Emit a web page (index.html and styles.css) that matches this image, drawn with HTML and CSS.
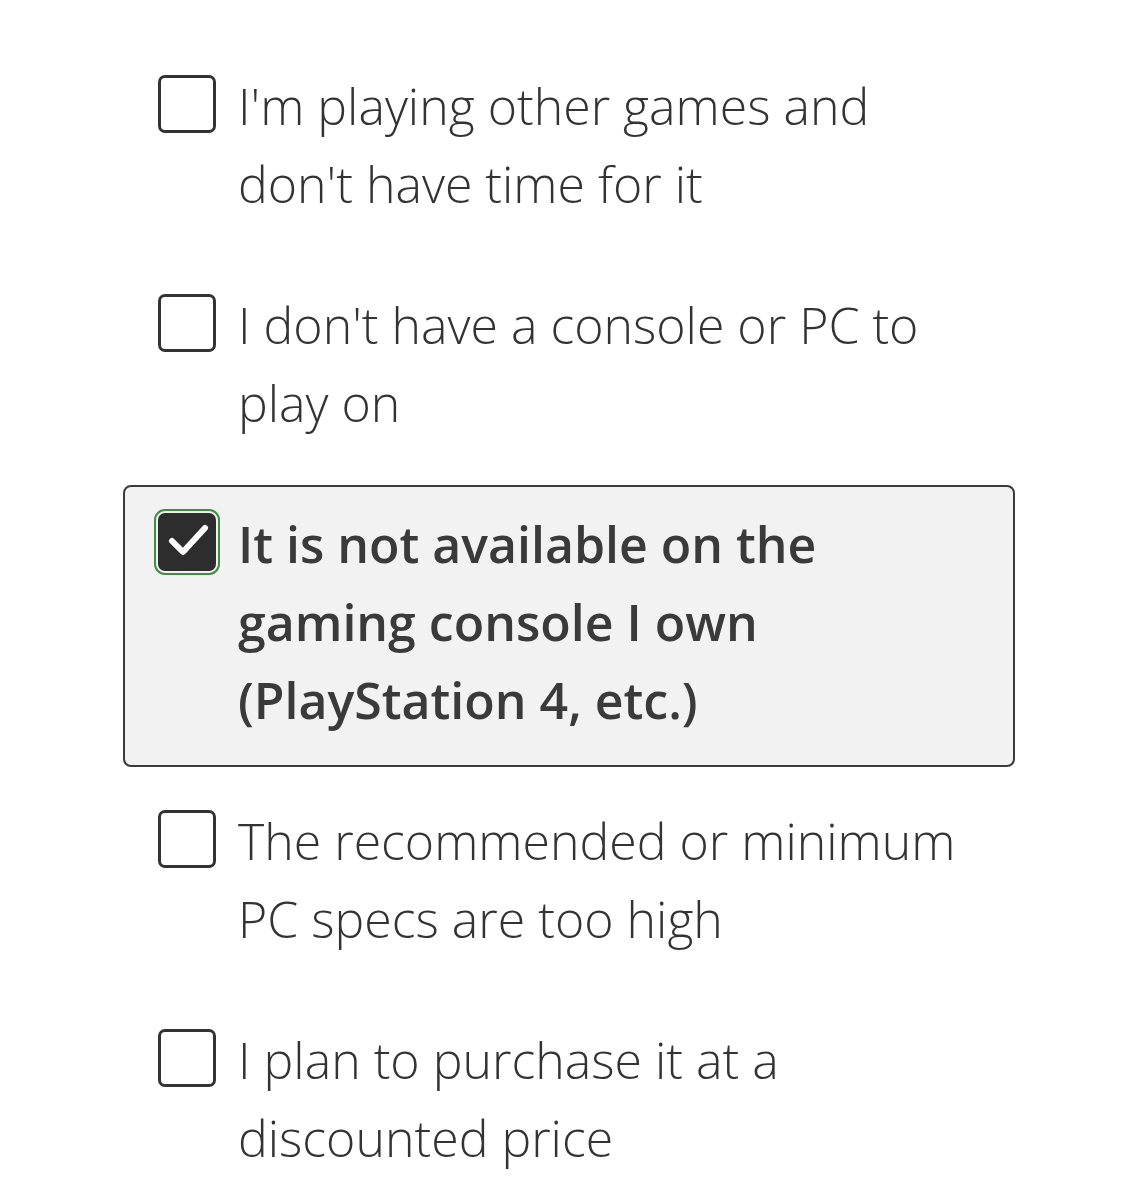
FILE: index.html
```html
<!DOCTYPE html>
<html>
    <head>
        <title>Survey question</title>
        <meta charset="UTF-8">
        <link rel="stylesheet" href="styles.css">
    </head>
    <body>
        <div class="question">
            <label class="choice">
                <span class="box"></span>
                <span class="label">I'm playing other games and don't have time for it</span>
            </label>
            <label class="choice">
                <span class="box"></span>
                <span class="label">I don't have a console or PC to play on</span>
            </label>
            <label class="choice selected">
                <span class="box">
                    <svg viewBox="0 0 58 58" width="58" height="58">
                        <path d="M14 28 L25 39 L47 15" fill="none" stroke="#fff" stroke-width="6" stroke-linecap="round" stroke-linejoin="round"/>
                    </svg>
                </span>
                <span class="label">It is not available on the gaming console I own (PlayStation 4, etc.)</span>
            </label>
            <label class="choice">
                <span class="box"></span>
                <span class="label">The recommended or minimum PC specs are too high</span>
            </label>
            <label class="choice">
                <span class="box"></span>
                <span class="label">I plan to purchase it at a discounted price</span>
            </label>
        </div>
    </body>
</html>
```

FILE: styles.css
```css
body {
    margin: 0;
    background: #ffffff;
    font-family: "Open Sans", sans-serif;
    color: #333333;
}

.question {
    width: 892px;
    margin-left: 123px;
    padding-top: 47px;
    display: flex;
    flex-direction: column;
    gap: 15px;
}

.choice {
    display: flex;
    gap: 22px;
    padding: 18px 33px 26px 33px;
    border: 2px solid transparent;
    border-radius: 8px;
}

.choice.selected {
    border-color: #3b3b3b;
    background: #f2f2f2;
}

.box {
    flex: none;
    width: 52px;
    height: 52px;
    margin-top: 8px;
    border: 3px solid #333333;
    border-radius: 7px;
    background: #ffffff;
    position: relative;
}

.box svg {
    position: absolute;
    left: -3px;
    top: -3px;
}

.selected .box {
    background: #2d2d2d;
    border-color: #2d2d2d;
    outline: 2px solid #3e8e41;
    outline-offset: 2px;
}

.label {
    font-size: 50px;
    font-weight: 300;
    line-height: 78px;
    width: 740px;
}

.selected .label {
    font-weight: 600;
    color: #3a3a3a;
}
```
